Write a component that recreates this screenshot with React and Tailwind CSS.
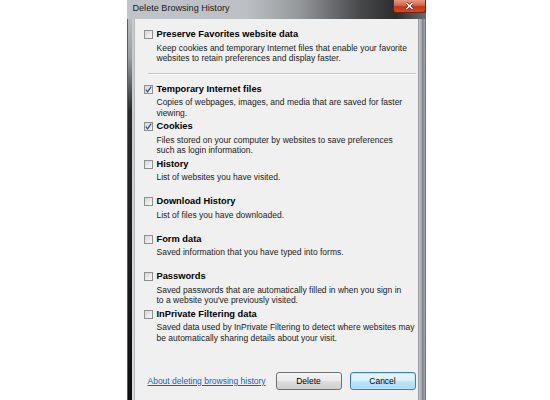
import React from "react";

const items = [
  {
    label: "Temporary Internet files",
    checked: true,
    lines: ["Copies of webpages, images, and media that are saved for faster", "viewing."],
  },
  {
    label: "Cookies",
    checked: true,
    lines: ["Files stored on your computer by websites to save preferences", "such as login information."],
  },
  { label: "History", lines: ["List of websites you have visited."] },
  { label: "Download History", lines: ["List of files you have downloaded."] },
  { label: "Form data", lines: ["Saved information that you have typed into forms."] },
  {
    label: "Passwords",
    lines: ["Saved passwords that are automatically filled in when you sign in", "to a website you've previously visited."],
  },
  {
    label: "InPrivate Filtering data",
    lines: ["Saved data used by InPrivate Filtering to detect where websites may", "be automatically sharing details about your visit."],
  },
];

const Box = ({ checked }) => (
  <span className="mt-[2px] w-[9px] h-[9px] shrink-0 border border-[#8e8f8f] bg-[linear-gradient(135deg,#d4d6d8,#f9f9f9)] flex items-center justify-center">
    {checked && (
      <svg width="7" height="7" viewBox="0 0 7 7">
        <path d="M0.8 3.6 L2.6 5.9 L6.2 0.6" fill="none" stroke="#3b5496" strokeWidth="1.3" />
      </svg>
    )}
  </span>
);

const Option = ({ label, checked, lines, className = "" }) => (
  <div className={"flex gap-[4px] " + className}>
    <Box checked={checked} />
    <div className="flex flex-col">
      <div className="text-[9.3px] leading-[13px] font-bold text-black whitespace-nowrap">{label}</div>
      <div className="mt-[1.5px] text-[8.5px] leading-[10.6px] text-[#1b1b1b] whitespace-nowrap">
        {lines.map((l) => (
          <div key={l}>{l}</div>
        ))}
      </div>
    </div>
  </div>
);

const App = () => {
  return (
    <div className="w-[550px] h-[400px] bg-white flex justify-center overflow-hidden font-['Liberation_Sans',Arial,sans-serif]">
      <div className="w-[299px] h-[400px] flex flex-col ml-[2px]">
        {/* title bar */}
        <div className="h-[19px] shrink-0 flex items-start bg-[linear-gradient(90deg,#c0c4c8_0%,#bcc0c4_40%,#94979a_58%,#46484a_78%,#2c2c2c_90%,#6a6c6e_100%)]">
          <span className="pl-[6px] text-[9.1px] leading-[17px] text-[#1a1a1a]">Delete Browsing History</span>
          <div className="ml-auto w-[33px] h-[13px] rounded-b-[3px] border border-t-0 border-[#6e2417] bg-[linear-gradient(180deg,#e49a86_0%,#d2664d_45%,#c5361a_55%,#d8492a_100%)] flex items-center justify-center">
            <svg width="9" height="8" viewBox="0 0 9 8">
              <path d="M1.5 1 L7.5 7 M7.5 1 L1.5 7" stroke="#5a1a10" strokeWidth="2.6" />
              <path d="M1.5 1 L7.5 7 M7.5 1 L1.5 7" stroke="#ffffff" strokeWidth="1.6" />
            </svg>
          </div>
        </div>

        <div className="flex flex-1">
          {/* left frame */}
          <div className="flex shrink-0">
            <div className="w-[5px] border-l border-[#5a5d60] bg-[linear-gradient(180deg,#b8bcc0_0%,#9a9ea2_10%,#2a2a2a_24%,#0e0e0e_100%)]" />
            <div className="w-[3px] bg-[linear-gradient(180deg,#c6cacd_0%,#d9dcde_100%)] border-r border-[#b4b8bb]" />
          </div>

          {/* client area */}
          <div className="flex-1 bg-[#f0f0f0] flex flex-col pl-[9px] pt-[9px]">
            <Option
              label="Preserve Favorites website data"
              lines={["Keep cookies and temporary Internet files that enable your favorite", "websites to retain preferences and display faster."]}
            />
            <div className="mt-[9px] ml-[4px] mr-[2px] h-[2px] border-t border-[#c4c4c4] border-b border-b-white" />
            <div className="mt-[8px] flex flex-col">
              {items.map((it) => (
                <Option key={it.label} {...it} className="h-[37.5px]" />
              ))}
            </div>
            <div className="mt-[27px] flex items-center pl-[4px] pr-[2px]">
              <span className="flex-1 text-[8.5px] text-[#0f5fcc] underline">About deleting browsing history</span>
              <div className="flex gap-[8px]">
                <button className="w-[66px] h-[18px] rounded-[3px] border border-[#707070] bg-[linear-gradient(180deg,#f3f3f3_0%,#ebebeb_48%,#dddddd_52%,#cfcfcf_100%)] text-[8.5px] text-black">
                  Delete
                </button>
                <button className="w-[66px] h-[18px] rounded-[3px] border border-[#3c7fb1] shadow-[inset_0_0_0_1px_#bfe6fb] bg-[linear-gradient(180deg,#eaf6fd_0%,#d9f0fc_48%,#bee6fd_52%,#a7d9f5_100%)] text-[8.5px] text-black">
                  Cancel
                </button>
              </div>
            </div>
          </div>

          {/* right frame */}
          <div className="w-[8px] shrink-0 border-l border-[#9a9ea2] bg-[linear-gradient(90deg,#c4c8cb_0%,#a4a8ab_40%,#7f8286_60%,#a6a9ac_100%)] border-r border-r-[#6e7276]" />
        </div>
      </div>
    </div>
  );
};

export default App;
